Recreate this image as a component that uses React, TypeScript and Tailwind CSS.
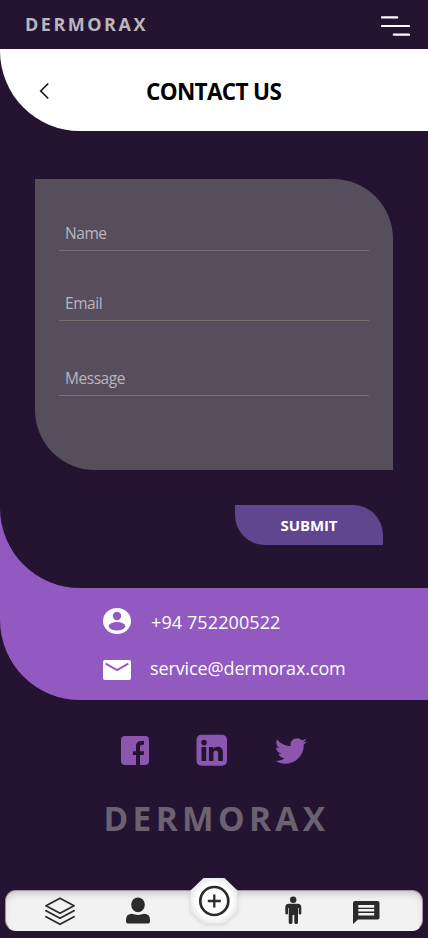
import React from 'react';

function Field({ label, className }: { label: string; className: string }) {
  return (
    <div className={`flex items-end border-b border-[#74706f] pl-[6px] ${className}`}>
      <span className="mb-[6px] text-[15.5px] leading-[22px] tracking-[-0.45px] text-[#bab5be]">{label}</span>
    </div>
  );
}

function Header() {
  return (
    <header className="flex h-[49px] items-start justify-between pl-[25px] pr-[18px]">
      <span className="mt-[12px] text-[18px] leading-6 font-bold tracking-[2.5px] text-[#bab7bc]">DERMORAX</span>
      <svg className="mt-[14px]" width="30" height="24" viewBox="0 0 30 24" stroke="#fff" strokeWidth="2.2" strokeLinecap="round">
        <path d="M2 3.4H17.2M2 12H29M13.8 20.6H29" />
      </svg>
    </header>
  );
}

function Contact() {
  return (
    <div className="flex h-[112px] flex-col text-[18px] leading-6 text-white">
      <div className="mt-[19px] flex h-7 items-start pl-[103px]">
        <svg width="28" height="28" viewBox="0 0 28 28">
          <ellipse cx="14" cy="14" rx="14" ry="13" fill="#fff" />
          <circle cx="14" cy="9" r="4.2" fill="#9259c0" />
          <ellipse cx="14" cy="19.3" rx="8.3" ry="4.2" fill="#9259c0" />
        </svg>
        <span className="ml-[20px] mt-[3px] tracking-[0.1px]">+94 752200522</span>
      </div>
      <div className="mt-[20px] flex h-7 items-start pl-[103px]">
        <svg className="mt-[5px]" width="28" height="20" viewBox="0 0 28 20">
          <rect width="28" height="20" rx="2" fill="#fff" />
          <path d="M2.7 3.7L14 10L25.3 3.7" fill="none" stroke="#9259c0" strokeWidth="2" />
        </svg>
        <span className="ml-[19px] mt-[1px] tracking-[-0.12px]">service@dermorax.com</span>
      </div>
    </div>
  );
}

function Socials() {
  return (
    <div className="mt-[34px] flex h-8 items-start pl-[121px] text-[#8b57ae]">
      <svg className="mt-[2px]" width="28" height="29" viewBox="0 0 28 29" fill="currentColor">
        <path d="M4 0H24Q28 0 28 4V25Q28 29 24 29H19V19H22.6L23.1 15.2H19V11.8C19 9.8 19.5 8.8 21.3 8.8H23V5.1C20 4.7 15 4.4 15 10.5V15.2H11.9V19H15V29H4Q0 29 0 25V4Q0 0 4 0Z" />
      </svg>
      <svg className="ml-[47px]" width="32" height="32" viewBox="0 0 32 32">
        <rect x=".5" y=".8" width="30.5" height="31" rx="5" fill="currentColor" />
        <circle cx="8" cy="8.6" r="2.8" fill="#241432" />
        <path transform="translate(.2)" d="M5.3 13H10V27H5.3ZM12.7 13H17V15C19 11.8 26.7 11.5 26.7 18.5V27H22V19.6C22 15.3 17.2 15.5 17.2 19.6V27H12.7Z" fill="#241432" />
      </svg>
      <svg className="ml-[47px] mt-[4px]" width="32" height="26" viewBox="0 0 24 20" preserveAspectRatio="none" fill="currentColor">
        <path transform="translate(0 -2)" d="M23.95 4.57a10 10 0 0 1-2.82.77 4.96 4.96 0 0 0 2.16-2.72c-.95.55-2 .96-3.13 1.18a4.92 4.92 0 0 0-8.38 4.48C7.69 8.1 4.07 6.13 1.64 3.16a4.93 4.93 0 0 0 1.52 6.57 4.9 4.9 0 0 1-2.23-.61v.06a4.92 4.92 0 0 0 3.95 4.83 5 5 0 0 1-2.21.08 4.94 4.94 0 0 0 4.6 3.42A9.87 9.87 0 0 1 0 19.54a14 14 0 0 0 7.55 2.21c9.05 0 14-7.5 14-13.98 0-.21 0-.42-.02-.63a10 10 0 0 0 2.42-2.57Z" />
      </svg>
    </div>
  );
}

function BottomNav() {
  return (
    <nav className="relative mt-[48px] ml-[5px] flex h-[41px] w-[418px] items-start rounded-[11px] border border-[#a693ad] border-b-[#f2f2f2] bg-[#f2f2f2] pl-[39px] text-[#2b2b2b] shadow-[inset_0_5px_7px_-2px_#cacaca]">
      <svg className="mt-[6px]" width="30" height="29" viewBox="0 0 30 29" fill="none" stroke="currentColor" strokeWidth="1.8" strokeLinejoin="round" strokeLinecap="round">
        <path d="M15 1.3L29 8.8L15 16.3L1 8.8Z" />
        <path d="M1 13.8L15 21.3L29 13.8M1 19.8L15 27.3L29 19.8" />
      </svg>
      <svg className="ml-[50.5px] mt-[6px]" width="24" height="27" viewBox="0 0 24 27" fill="currentColor">
        <ellipse cx="12" cy="7.8" rx="6.8" ry="7.4" />
        <path d="M0 23Q0 16.8 6 16.8Q12 19 18 16.8Q24 16.8 24 23V24.5Q24 26.5 22 26.5H2Q0 26.5 0 24.5Z" />
      </svg>
      <svg className="absolute left-[181px] top-[-16px] drop-shadow-[0_1px_2px_#0002]" width="54" height="54" viewBox="0 0 54 54">
        <defs>
          <radialGradient id="dial" cx="50%" cy="50%" r="54%">
            <stop offset="70%" stopColor="#fff" />
            <stop offset="100%" stopColor="#e6e6e6" />
          </radialGradient>
        </defs>
        <path d="M16.5 3H37.5L50.5 15.5V36L37.5 48.5H16.5L3.5 36V15.5Z" fill="url(#dial)" />
        <circle cx="27.3" cy="26" r="14" fill="none" stroke="currentColor" strokeWidth="2.7" />
        <path d="M20.8 26H33.8M27.3 19.5V32.5" stroke="currentColor" strokeWidth="2.3" />
      </svg>
      <svg className="ml-[135.5px] mt-[5px]" width="17" height="29" viewBox="0 0 17 29" fill="currentColor">
        <circle cx="8.2" cy="3.8" r="3.2" />
        <path d="M3.7 7.8H12.7Q16.3 7.8 16.3 11.5V17.2Q16.3 18.4 15 18.4Q13.7 18.4 13.7 17.2V12H13V26.5Q13 28 11.1 28Q9.3 28 9.3 26.5V19H7.5V26.5Q7.5 28 5.5 28Q3.7 28 3.7 26.5V12H3V17.2Q3 18.4 1.7 18.4Q.3 18.4 .3 17.2V11.5Q.3 7.8 3.7 7.8Z" />
      </svg>
      <svg className="ml-[51px] mt-[10px]" width="27" height="23" viewBox="0 0 27 23">
        <path d="M2 0H24.5Q26.5 0 26.5 2V16.5Q26.5 18.5 24.5 18.5H5L0 23V2Q0 0 2 0Z" fill="currentColor" />
        <path d="M5.3 5.4H21.2M5.3 9.3H21.2M5.3 13.2H21.2" stroke="#f2f2f2" strokeWidth="2.6" />
      </svg>
    </nav>
  );
}

export default function App() {
  return (
    <div className="h-[938px] w-[428px] overflow-hidden bg-[#241432] font-['Open_Sans','Noto_Sans',sans-serif]">
      <div className="h-[700px] rounded-bl-[80px] bg-[#9259c0]">
        <main className="h-[588px] rounded-bl-[80px] bg-[#241432]">
          <Header />
          <section className="flex h-[82px] items-start rounded-bl-[80px] bg-white">
            <svg className="ml-[39px] mt-[33px]" width="11" height="18" viewBox="0 0 11 18" fill="none" stroke="#111" strokeWidth="1.6">
              <path d="M9.3 1.5L1.7 9L9.3 16.5" />
            </svg>
            <h1 className="ml-[96px] mt-[27px] text-[22.5px] leading-[32px] font-bold tracking-[-0.65px] whitespace-nowrap text-black">CONTACT US</h1>
          </section>
          <form className="mt-12 ml-[35px] flex h-[291px] w-[358px] flex-col rounded-tr-[60px] rounded-bl-[60px] bg-[#574e5d] px-6">
            <Field label="Name" className="h-[72px]" />
            <Field label="Email" className="h-[70px]" />
            <Field label="Message" className="h-[75px]" />
          </form>
          <button className="mt-[35px] ml-[235px] flex h-10 w-[148px] items-center justify-center rounded-tr-[30px] rounded-bl-[30px] bg-[#60468f] text-[15px] font-bold tracking-[-0.1px] text-white">SUBMIT</button>
        </main>
        <Contact />
      </div>
      <Socials />
      <div className="mt-[28px] h-12 pl-[103.5px] text-[33.5px] leading-[48px] font-bold tracking-[4.3px] text-[#6b6170]">DERMORAX</div>
      <BottomNav />
    </div>
  );
}
